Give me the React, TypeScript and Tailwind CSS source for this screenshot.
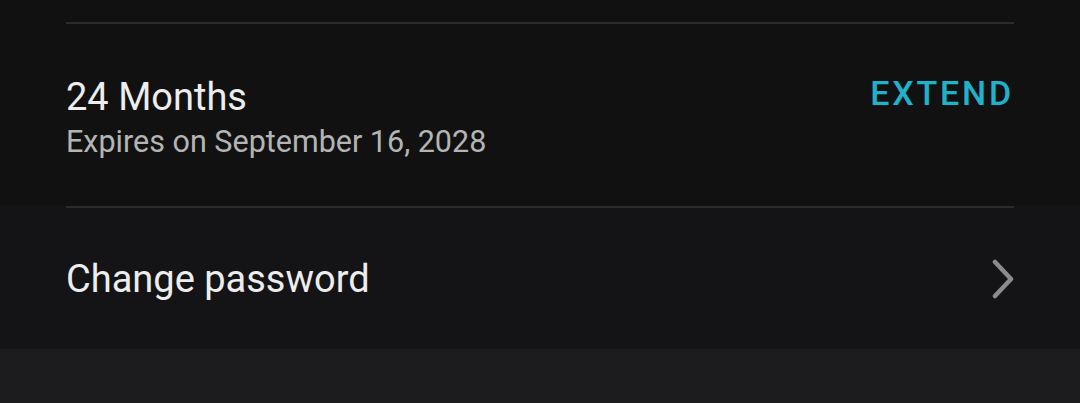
const font = { fontFamily: "Roboto, 'Noto Sans', sans-serif" };

function Chevron() {
  return (
    <svg width="24" height="40" viewBox="0 0 24 40" fill="none">
      <path
        d="M4 3 L20 20 L4 37"
        stroke="#8b8b8b"
        strokeWidth="4.5"
        strokeLinecap="round"
        strokeLinejoin="round"
      />
    </svg>
  );
}

export default function App() {
  return (
    <div className="flex h-[403px] w-full flex-col bg-[#111111]" style={font}>
      {/* subscription */}
      <section className="h-[206px] px-[66px] pt-[22px]">
        <div className="h-[2px] w-full bg-[#2c2c2c]" />
        <div className="mt-[51px] flex items-start justify-between">
          <div>
            <div className="text-[38px] leading-[44px] text-[#ededed]">24 Months</div>
            <div className="mt-[5px] text-[30.5px] leading-[36px] text-[#b4b4b4]">
              Expires on September 16, 2028
            </div>
          </div>
          <button className="-mt-[2px] text-[34px] font-medium leading-[40px] tracking-[2.8px] text-[#20b1cb]">
            EXTEND
          </button>
        </div>
      </section>

      {/* password */}
      <section className="flex h-[143px] flex-col bg-[#141416] px-[66px]">
        <div className="h-[2px] w-full bg-[#2c2c2e]" />
        <div className="flex flex-1 items-center justify-between">
          <span className="text-[38px] leading-[44px] text-[#ededed]">Change password</span>
          <div className="-mr-[1px]">
            <Chevron />
          </div>
        </div>
      </section>

      <div className="flex-1 bg-[#1c1c1e]" />
    </div>
  );
}
